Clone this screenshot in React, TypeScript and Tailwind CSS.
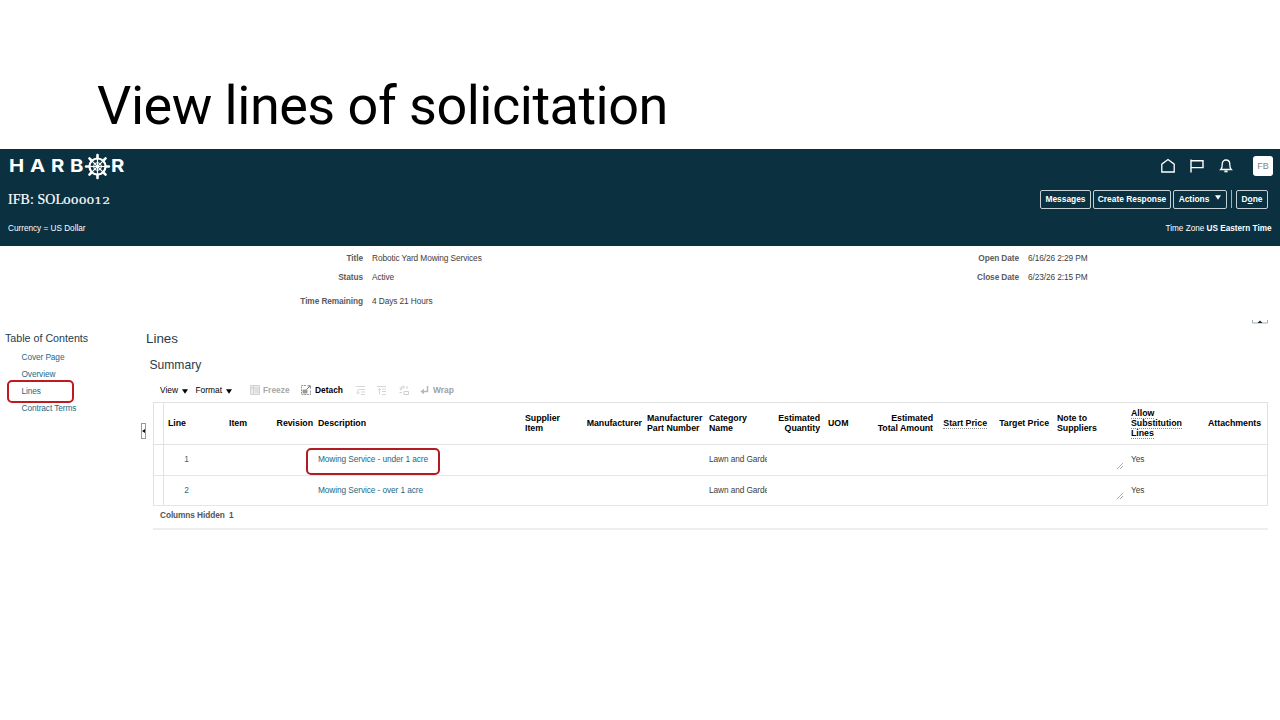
import React from 'react';

function Wheel() {
  const spokes = [0, 45, 90, 135, 180, 225, 270, 315];
  return (
    <svg className="h-[27px] w-[27px] shrink-0" viewBox="-13.5 -13.5 27 27" fill="none" stroke="white">
      <circle r="8" strokeWidth="2.2" />
      <circle r="3.8" strokeWidth="1.1" />
      <circle r="1.6" fill="white" stroke="none" />
      {spokes.map((a) => (
        <g key={a} transform={`rotate(${a})`}>
          <path d="M0 0V-9" strokeWidth="1.2" />
          <path d="M0 -8.5V-11.4" strokeWidth="2.6" strokeLinecap="round" />
        </g>
      ))}
    </svg>
  );
}

function Caret({ className = '' }: { className?: string }) {
  return (
    <svg className={`h-[5px] w-[6px] shrink-0 ${className}`} viewBox="0 0 7 5">
      <path d="M0 0H7L3.5 5Z" fill="currentColor" />
    </svg>
  );
}

const button = 'flex h-[19px] items-center justify-center rounded-[2px] border border-[#c3d0d6] text-[8.4px] tracking-normal font-bold leading-none';
const letter = 'origin-left scale-x-[1.13]';

function Header() {
  return (
    <header className="h-[97px] bg-[#0b303f] text-white">
      <div className="flex h-[34px] items-center justify-between pl-[9px] pr-[7px]">
        <div className="flex items-center font-['Inter',sans-serif] text-[18px] font-bold leading-none">
          <span className={`w-[21px] ${letter}`}>H</span>
          <span className={`w-[21px] ${letter}`}>A</span>
          <span className={`w-[19px] ${letter}`}>R</span>
          <span className={`w-[14px] ${letter}`}>B</span>
          <Wheel />
          <span className={letter}>R</span>
        </div>
        <div className="flex items-center">
          <svg className="mr-[13px] h-[16px] w-[16px]" viewBox="0 0 16 16" fill="none" stroke="white" strokeWidth="1.3">
            <path d="M1.8 14V6.2L8 1.6L14.2 6.2V14Z" />
          </svg>
          <svg className="mr-[13px] h-[16px] w-[16px]" viewBox="0 0 16 16" fill="none" stroke="white" strokeWidth="1.4">
            <path d="M2 1.5V14.5M2 2.8H14V9.6H2" />
          </svg>
          <svg className="mr-[19px] h-[16px] w-[16px]" viewBox="0 0 16 16" fill="none" stroke="white" strokeWidth="1.3">
            <path d="M2.8 11.5C4.2 10.3 4.2 9 4.2 6.4C4.2 3.8 5.8 2 8 2C10.2 2 11.8 3.8 11.8 6.4C11.8 9 11.8 10.3 13.2 11.5Z" />
            <path d="M6.4 13.4H9.6" strokeWidth="1.8" />
          </svg>
          <div className="flex h-[20px] w-[20px] items-center justify-center rounded-[3px] bg-white text-[9px] text-[#858585]">FB</div>
        </div>
      </div>
      <div className="flex h-[32px] items-center justify-between pl-[8px] pr-[12px]">
        <h2 className="flex items-baseline whitespace-pre pt-[1px] font-['Liberation_Serif',serif] text-[13.9px] leading-none [-webkit-text-stroke:0.2px_white]">
          <span className="w-[55px] tracking-[0.1px]">IFB: SOL</span>
          <span className="inline-block origin-left scale-x-[1.27] font-['DejaVu_Serif',serif] text-[9.7px] tracking-normal">000012</span>
        </h2>
        <div className="flex items-center">
          <div className={`${button} mr-[2px] w-[51px]`}>Messages</div>
          <div className={`${button} mr-[2px] w-[78px]`}>Create Response</div>
          <div className={`${button} w-[54px] gap-[6px]`}>Actions<Caret className="mb-[3px]" /></div>
          <div className="mx-[4px] h-[18px] w-px bg-[#9fb2ba]" />
          <div className={`${button} w-[32px] whitespace-pre`}>D<span className="underline">o</span>ne</div>
        </div>
      </div>
      <div className="flex h-[26px] items-center justify-between pl-[8px] pr-[8.5px] text-[8.2px] tracking-normal">
        <span>Currency = US Dollar</span>
        <span>Time Zone <b>US Eastern Time</b></span>
      </div>
    </header>
  );
}

function Field({ label, value, className }: { label: string; value: string; className: string }) {
  return (
    <div className={`flex items-center gap-[9px] ${className}`}>
      <dt className="w-[63px] whitespace-nowrap text-right font-bold text-[#5c5c5c]">{label}</dt>
      <dd>{value}</dd>
    </div>
  );
}

function Contents() {
  return (
    <nav className="w-[140px] shrink-0 pl-[5px] pt-[5px]">
      <h3 className="h-[18px] text-[10.7px] leading-[15px] tracking-normal text-[#1f3d4b]">Table of Contents</h3>
      <ul className="pl-[16.5px] leading-[17px] text-[#1b6a86]">
        <li>Cover Page</li>
        <li>Overview</li>
        <li className="relative">
          <span className="absolute -left-[14.5px] -top-[3px] h-[23px] w-[67px] rounded-[5px] border-2 border-[#c0191f]" />
          Lines
        </li>
        <li>Contract Terms</li>
      </ul>
    </nav>
  );
}

function Toolbar() {
  return (
    <div className="flex h-[20px] items-center whitespace-nowrap pl-[20px] text-[8.4px] tracking-normal text-black">
      <span className="w-[22px]">View</span><Caret className="mr-[7.5px] mt-[2px]" />
      <span className="w-[30px]">Format</span><Caret className="mr-[18px] mt-[2px]" />
      <svg className="mr-[3.5px] h-[10px] w-[10px]" viewBox="0 0 10 10" stroke="#d2d2d2" fill="none">
        <path d="M.5 .5H9.5V9.5H.5Z" fill="#ececec" />
        <path d="M1 3H9M3.5 1V9M5 5H9M5 7H9" />
      </svg>
      <span className="w-[38px] font-bold text-[#a9a9a9]">Freeze</span>
      <svg className="mr-[4px] h-[10px] w-[10px]" viewBox="0 0 10 10" fill="none" stroke="#777">
        <path d="M5 .5H.5V9.5H9.5V5" strokeDasharray="2 .7" stroke="#999" />
        <path d="M2 5H6V8H2Z" fill="#999" stroke="#999" />
        <path d="M5.5 4.5L9 1M6.5 .8H9.3V3.5" />
      </svg>
      <span className="w-[41px] font-bold">Detach</span>
      <svg className="mr-[11px] h-[10px] w-[10px]" viewBox="0 0 10 10" fill="none" stroke="#d6d6d6">
        <path d="M0 1.5H9M3 4.5H9M5 7H9M5 9.5H9M2 4V9M.5 7.5L2 9L3.5 7.5" />
      </svg>
      <svg className="mr-[12px] h-[10px] w-[10px]" viewBox="0 0 10 10" fill="none" stroke="#d6d6d6">
        <path d="M0 1.5H9M5 4H9M5 6.5H9M5 9.5H9M2.5 9.5V3.5M1 5L2.5 3.5L4 5" />
      </svg>
      <svg className="mr-[11px] h-[10px] w-[10px]" viewBox="0 0 10 10" fill="none" stroke="#d0d0d0">
        <path d="M2 5V2H5.5M.5 3.5L2 5L3.5 3.5M4 .5L5.5 2L4 3.5M8 1V4M5 6.5H9.5V9.5H5ZM.5 7.5H3" />
      </svg>
      <svg className="mr-[4px] h-[10px] w-[9px]" viewBox="0 0 9 10" fill="none" stroke="#b8b8b8">
        <path d="M7.5 1V6.5H2" strokeWidth="1.5" />
        <path d="M.3 6.5L4 3.8V9.2Z" fill="#b8b8b8" stroke="none" />
      </svg>
      <span className="font-bold text-[#a0a0a0]">Wrap</span>
    </div>
  );
}

const grid = 'grid grid-cols-[10px_42px_45px_63px_207px_61px_61px_62px_62px_57px_43px_70px_54px_62px_74px_77px_1fr] items-center';

type Column = { lines: string[]; right?: boolean; dotted?: boolean; pad?: string };

const columns: Column[] = [
  { lines: ['Line'] },
  { lines: ['Item'], right: true },
  { lines: ['Revision'], right: true, pad: 'pr-[1px]' },
  { lines: ['Description'] },
  { lines: ['Supplier', 'Item'] },
  { lines: ['Manufacturer'], right: true, pad: 'pr-[1px]' },
  { lines: ['Manufacturer', 'Part Number'] },
  { lines: ['Category', 'Name'] },
  { lines: ['Estimated', 'Quantity'], right: true },
  { lines: ['UOM'] },
  { lines: ['Estimated', 'Total Amount'], right: true },
  { lines: ['Start Price'], right: true, dotted: true },
  { lines: ['Target Price'], right: true },
  { lines: ['Note to', 'Suppliers'] },
  { lines: ['Allow', 'Substitution', 'Lines'], dotted: true },
  { lines: ['Attachments'], right: true, pad: 'pr-[6px]' },
];

function Row({ n, text, boxed }: { n: number; text: string; boxed?: boolean }) {
  return (
    <div className={`${grid} h-[30.5px] border-b border-[#e6e6e6]`}>
      <span className="h-full border-r border-[#e2e2e2]" />
      <span className="pl-[3px] text-center text-[#1b6a86]">{n}</span>
      <span />
      <span />
      <span className="relative pl-[4px] text-[#1b6a86]">
        {boxed && <span className="absolute -left-[8px] -top-[4px] h-[27px] w-[134px] rounded-[5px] border-2 border-[#b01c22]" />}
        {text}
      </span>
      <span />
      <span />
      <span />
      <span className="overflow-hidden whitespace-nowrap pl-[4px]">Lawn and Garden</span>
      <span />
      <span />
      <span />
      <span />
      <span />
      <span className="flex justify-end pr-[4px] pt-[12px]">
        <svg className="h-[6px] w-[6px]" viewBox="0 0 6 6" stroke="#999" strokeWidth=".8"><path d="M0 6L6 0M3 6L6 3" /></svg>
      </span>
      <span className="pl-[4px]">Yes</span>
      <span />
    </div>
  );
}

function LinesTable() {
  return (
    <div className="ml-[13px] w-[1115px] border-b-2 border-[#eee] leading-[15px]">
      <div className="border-x border-t border-[#e2e2e2]">
        <div className={`${grid} h-[42px] border-b border-[#e2e2e2] text-[8.8px] font-bold leading-[10px] tracking-[-0.03px] text-black`}>
          <span className="h-full border-r border-[#e2e2e2]" />
          {columns.map((c) => (
            <div key={c.lines.join(' ')} className={`flex flex-col whitespace-nowrap ${c.dotted ? '' : '-mt-px'} ${c.right ? `items-end ${c.pad ?? 'pr-[4px]'}` : 'items-start pl-[4px]'}`}>
              {c.lines.map((l) => (
                <span key={l} className={c.dotted ? 'border-b border-dotted border-[#888] leading-[9px]' : ''}>{l}</span>
              ))}
            </div>
          ))}
        </div>
        <Row n={1} text="Mowing Service - under 1 acre" boxed />
        <Row n={2} text="Mowing Service - over 1 acre" />
      </div>
      <div className="h-[22px] pl-[7px] pt-[2px] font-bold text-[#555]">Columns Hidden&nbsp; 1</div>
    </div>
  );
}

export default function App() {
  return (
    <div className="h-[720px] w-[1280px] overflow-hidden bg-white font-['Liberation_Sans',Arial,sans-serif] text-[8.3px] leading-[15px] tracking-[-0.09px] text-[#3d3d3d]">
      <div className="h-[149px] pl-[97px] pt-[74px]">
        <h1 className="whitespace-nowrap font-['Roboto',sans-serif] text-[54px] leading-[63px] tracking-[-0.5px] text-black">View lines of solicitation</h1>
      </div>
      <Header />
      <dl className="flex h-[74px] pl-[300px] pt-[5px]">
        <div className="w-[656px]">
          <Field label="Title" value="Robotic Yard Mowing Services" className="mb-[4px]" />
          <Field label="Status" value="Active" className="mb-[9px]" />
          <Field label="Time Remaining" value="4 Days 21 Hours" className="" />
        </div>
        <div>
          <Field label="Open Date" value="6/16/26 2:29 PM" className="mb-[4px]" />
          <Field label="Close Date" value="6/23/26 2:15 PM" className="" />
        </div>
      </dl>
      <div className="flex h-[6px] justify-end pr-[12px]">
        <svg className="h-[4px] w-[16px]" viewBox="0 0 16 4">
          <path d="M.5 0V3H15.5V0" fill="none" stroke="#9fb0b8" />
          <path d="M5.5 3L8 .5L10.5 3Z" fill="#222" />
        </svg>
      </div>
      <main className="flex">
        <Contents />
        <section className="relative grow">
          <div className="absolute left-[1px] top-[97px] flex h-[16px] w-[5px] items-center justify-center border border-[#999]">
            <svg className="h-[4px] w-[3px]" viewBox="0 0 3 4"><path d="M3 0V4L0 2Z" fill="#111" /></svg>
          </div>
          <h2 className="pl-[6px] pt-[4px] text-[13.4px] leading-[18px] tracking-normal text-[#1f3d4b]">Lines</h2>
          <h3 className="h-[32px] pl-[9.5px] pt-[8px] text-[12.1px] leading-[18px] tracking-normal text-[#1f3d4b]">Summary</h3>
          <Toolbar />
          <div className="h-[2px]" />
          <LinesTable />
        </section>
      </main>
    </div>
  );
}
